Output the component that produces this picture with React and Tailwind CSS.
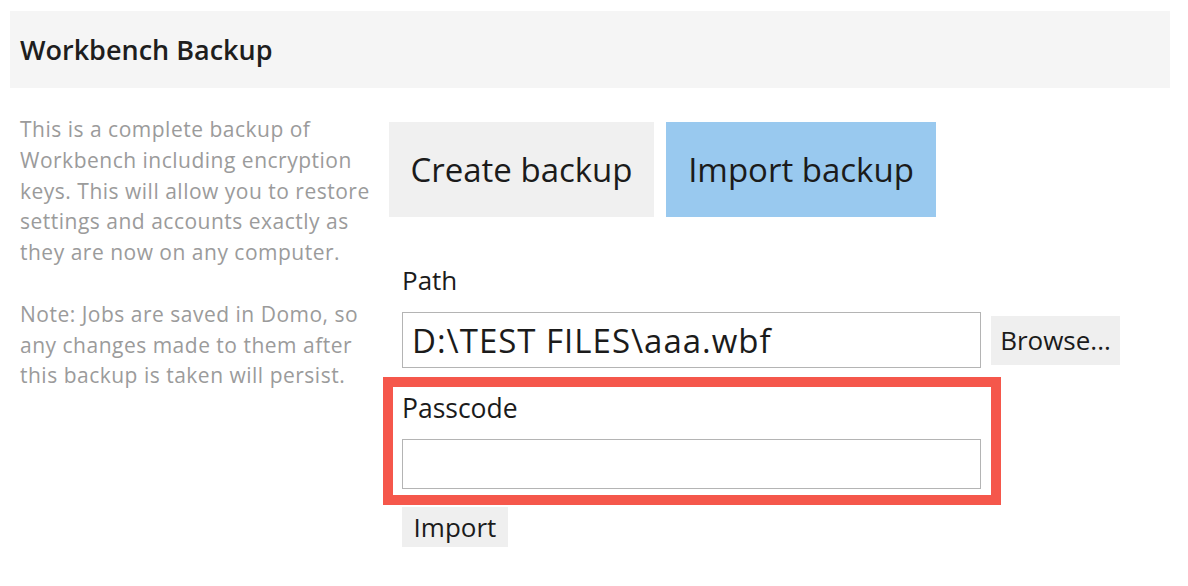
import React, { useState } from 'react';

const BackupPanel = () => {
  const [mode, setMode] = useState('import');
  const [path, setPath] = useState('D:\\TEST FILES\\aaa.wbf');
  const [passcode, setPasscode] = useState('');

  const tabClass = (active) =>
    active
      ? 'h-[95px] bg-[#99c9ef] text-[33px] text-[#1b1b1b]'
      : 'h-[95px] bg-[#f0f0f0] text-[33px] text-[#1b1b1b]';

  return (
    <div className="min-h-screen bg-white font-['Open_Sans',sans-serif] text-[#1b1b1b]">
      {/* Section header */}
      <div className="pl-[10px] pr-[18px] pt-[11px]">
        <div className="h-[77px] bg-[#f5f5f5] flex items-center pl-[10px]">
          <h1 className="text-[27px] font-semibold text-[#1e1e1e] pt-[2px]">Workbench Backup</h1>
        </div>
      </div>

      <div className="flex items-start pt-[26px]">
        {/* Description */}
        <div className="w-[389px] pl-[20px] pr-[13px] text-[21px] leading-[30.75px] tracking-[0.5px] text-[#9b9b9b]">
          <p>This is a complete backup of Workbench including encryption keys. This will allow you to restore settings and accounts exactly as they are now on any computer.</p>
          <p className="mt-[31px]">Note: Jobs are saved in Domo, so any changes made to them after this backup is taken will persist.</p>
        </div>

        {/* Form */}
        <div className="flex flex-col pt-[8px]">
          <div className="flex gap-[12px]">
            <button onClick={() => setMode('create')} className={`w-[265px] ${tabClass(mode === 'create')}`}>
              Create backup
            </button>
            <button onClick={() => setMode('import')} className={`w-[270px] ${tabClass(mode === 'import')}`}>
              Import backup
            </button>
          </div>

          <div className="ml-[13px] flex flex-col">
            <label className="mt-[46px] text-[26px] leading-[34px]">Path</label>
            <div className="mt-[15px] flex items-center gap-[10px]">
              <input
                value={path}
                onChange={e => setPath(e.target.value)}
                className="w-[579px] h-[56px] border border-[#b4b4b4] px-[9px] text-[33px] tracking-[1px] outline-none"
              />
              <button className="w-[129px] h-[49px] bg-[#efefef] text-[26px]">Browse...</button>
            </div>

            <div className="mt-[9px] -ml-[19px] w-[618px] border-[10px] border-[#f5574b] pl-[9px] pt-[4px] pb-[6px]">
              <label className="block text-[26.5px] leading-[34px]">Passcode</label>
              <input
                type="password"
                value={passcode}
                onChange={e => setPasscode(e.target.value)}
                className="mt-[14px] w-[579px] h-[50px] border border-[#b4b4b4] px-[9px] text-[24px] outline-none"
              />
            </div>

            <button className="mt-[2px] w-[106px] h-[40px] bg-[#efefef] text-[26px] leading-[40px]">Import</button>
          </div>
        </div>
      </div>
    </div>
  );
};

export default function App() {
  return <BackupPanel />;
}
